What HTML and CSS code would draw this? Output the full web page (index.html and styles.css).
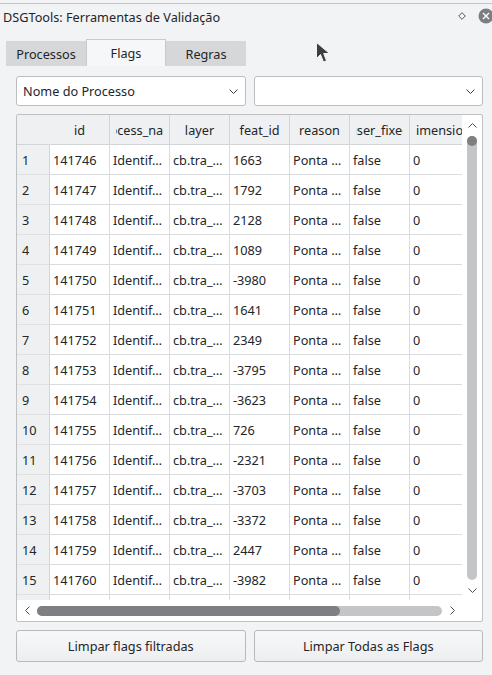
FILE: index.html
```html
<!DOCTYPE html>
<html lang="pt">
<head>
<meta charset="utf-8">
<title>DSGTools: Ferramentas de Validação</title>
<link rel="stylesheet" href="styles.css">
</head>
<body>
<div class="topline"></div>
<div class="titlebar">
  <span class="title">DSGTools: Ferramentas de Validação</span>
  <svg class="float-ic" viewBox="0 0 8 8"><path d="M4 0.7 L7.3 4 L4 7.3 L0.7 4 Z" fill="none" stroke="#55585b" stroke-width="1"/></svg>
  <svg class="close-ic" viewBox="0 0 16 16"><circle cx="8" cy="8" r="7.5" fill="#7c7e81"/><path d="M5 5 L11 11 M11 5 L5 11" stroke="#fff" stroke-width="1.4"/></svg>
</div>
<div class="tabs">
  <div class="tab">Processos</div>
  <div class="tab active">Flags</div>
  <div class="tab">Regras</div>
</div>
<div class="panel">
  <div class="combos">
    <div class="combo"><span class="combo-text">Nome do Processo</span><svg class="chev" viewBox="0 0 9 5"><polyline points="0.5,0.5 4.5,4.5 8.5,0.5" fill="none" stroke="#3d4043" stroke-width="1"/></svg></div>
    <div class="combo"><span class="combo-text"></span><svg class="chev" viewBox="0 0 9 5"><polyline points="0.5,0.5 4.5,4.5 8.5,0.5" fill="none" stroke="#3d4043" stroke-width="1"/></svg></div>
  </div>
  <div class="frame">
    <div class="frame-main">
      <div class="viewport">
        <table>
          <colgroup><col class="c-vh"><col class="c"><col class="c"><col class="c"><col class="c"><col class="c"><col class="c"><col class="c"></colgroup>
          <thead>
            <tr>
              <th class="corner"></th>
              <th><div class="h"><span>id</span></div></th>
              <th><div class="h"><span>process_name</span></div></th>
              <th><div class="h"><span>layer</span></div></th>
              <th><div class="h"><span>feat_id</span></div></th>
              <th><div class="h"><span>reason</span></div></th>
              <th><div class="h"><span>user_fixed</span></div></th>
              <th><div class="h"><span>dimension</span></div></th>
            </tr>
          </thead>
          <tbody>
            <tr><td class="vh">1</td><td>141746</td><td>Identif…</td><td>cb.tra_…</td><td>1663</td><td>Ponta …</td><td>false</td><td>0</td></tr>
            <tr><td class="vh">2</td><td>141747</td><td>Identif…</td><td>cb.tra_…</td><td>1792</td><td>Ponta …</td><td>false</td><td>0</td></tr>
            <tr><td class="vh">3</td><td>141748</td><td>Identif…</td><td>cb.tra_…</td><td>2128</td><td>Ponta …</td><td>false</td><td>0</td></tr>
            <tr><td class="vh">4</td><td>141749</td><td>Identif…</td><td>cb.tra_…</td><td>1089</td><td>Ponta …</td><td>false</td><td>0</td></tr>
            <tr><td class="vh">5</td><td>141750</td><td>Identif…</td><td>cb.tra_…</td><td>-3980</td><td>Ponta …</td><td>false</td><td>0</td></tr>
            <tr><td class="vh">6</td><td>141751</td><td>Identif…</td><td>cb.tra_…</td><td>1641</td><td>Ponta …</td><td>false</td><td>0</td></tr>
            <tr><td class="vh">7</td><td>141752</td><td>Identif…</td><td>cb.tra_…</td><td>2349</td><td>Ponta …</td><td>false</td><td>0</td></tr>
            <tr><td class="vh">8</td><td>141753</td><td>Identif…</td><td>cb.tra_…</td><td>-3795</td><td>Ponta …</td><td>false</td><td>0</td></tr>
            <tr><td class="vh">9</td><td>141754</td><td>Identif…</td><td>cb.tra_…</td><td>-3623</td><td>Ponta …</td><td>false</td><td>0</td></tr>
            <tr><td class="vh">10</td><td>141755</td><td>Identif…</td><td>cb.tra_…</td><td>726</td><td>Ponta …</td><td>false</td><td>0</td></tr>
            <tr><td class="vh">11</td><td>141756</td><td>Identif…</td><td>cb.tra_…</td><td>-2321</td><td>Ponta …</td><td>false</td><td>0</td></tr>
            <tr><td class="vh">12</td><td>141757</td><td>Identif…</td><td>cb.tra_…</td><td>-3703</td><td>Ponta …</td><td>false</td><td>0</td></tr>
            <tr><td class="vh">13</td><td>141758</td><td>Identif…</td><td>cb.tra_…</td><td>-3372</td><td>Ponta …</td><td>false</td><td>0</td></tr>
            <tr><td class="vh">14</td><td>141759</td><td>Identif…</td><td>cb.tra_…</td><td>2447</td><td>Ponta …</td><td>false</td><td>0</td></tr>
            <tr><td class="vh">15</td><td>141760</td><td>Identif…</td><td>cb.tra_…</td><td>-3982</td><td>Ponta …</td><td>false</td><td>0</td></tr>
            <tr><td class="vh"></td><td></td><td></td><td></td><td></td><td></td><td></td><td></td></tr>
          </tbody>
        </table>
      </div>
      <div class="vscroll">
        <div class="varr"><svg class="schev" viewBox="0 0 9 5"><polyline points="0.5,4.5 4.5,0.5 8.5,4.5" fill="none" stroke="#4a4d50" stroke-width="1"/></svg></div>
        <div class="vtrack"><div class="vhandle"></div></div>
        <div class="varr"><svg class="schev" viewBox="0 0 9 5"><polyline points="0.5,0.5 4.5,4.5 8.5,0.5" fill="none" stroke="#4a4d50" stroke-width="1"/></svg></div>
      </div>
    </div>
    <div class="frame-bottom">
      <div class="hscroll">
        <div class="harr"><svg class="hchev" viewBox="0 0 5 9"><polyline points="4.5,0.5 0.5,4.5 4.5,8.5" fill="none" stroke="#4a4d50" stroke-width="1"/></svg></div>
        <div class="htrack"><div class="hhandle"></div></div>
        <div class="harr"><svg class="hchev" viewBox="0 0 5 9"><polyline points="0.5,0.5 4.5,4.5 0.5,8.5" fill="none" stroke="#4a4d50" stroke-width="1"/></svg></div>
      </div>
      <div class="corner-box"></div>
    </div>
  </div>
  <div class="buttons">
    <button class="btn">Limpar flags filtradas</button>
    <button class="btn">Limpar Todas as Flags</button>
  </div>
</div>
<svg class="cursor" viewBox="0 0 17 24" width="17" height="24"><path d="M1.5 1.5 L1.5 17.5 L5.5 13.5 L8.5 21 L11.5 19.8 L8.7 12.5 L14.5 12.5 Z" fill="#3b3d40" stroke="#f4f4f4" stroke-width="1" stroke-linejoin="round"/></svg>
</body>
</html>
```

FILE: styles.css
```css
* { box-sizing: border-box; }
html, body { margin: 0; padding: 0; }
body {
  width: 492px;
  height: 675px;
  overflow: hidden;
  position: relative;
  background: #f2f3f5;
  font-family: "Noto Sans", "DejaVu Sans", sans-serif;
  font-size: 12.7px;
  color: #232629;
}
.topline { height: 4px; border-bottom: 1px solid #c4c5c7; }
.titlebar {
  height: 26px;
  display: flex;
  align-items: center;
  padding-left: 3px;
  line-height: 26px;
}
.title { flex: 1; white-space: nowrap; }
.float-ic { width: 8px; height: 8px; margin-right: 12px; margin-bottom: 2px; }
.close-ic { width: 16px; height: 16px; margin-right: -2px; margin-bottom: 2px; }

.tabs { display: flex; margin-top: 9px; margin-left: 6px; height: 27px; }
.tab {
  width: 80px;
  margin-top: 2px;
  height: 25px;
  background: #d6d7d9;
  display: flex;
  align-items: center;
  justify-content: center;
}
.tab.active {
  margin-top: 0;
  height: 27px;
  background: #f6f7f8;
  border: 1px solid #c9cacc;
  border-bottom: none;
  padding-bottom: 1px;
}

.panel { padding: 10px 9px 0 16px; }
.combos { display: flex; gap: 8px; }
.combo {
  flex: 1;
  height: 30px;
  background: #fff;
  border: 1px solid #bcbdbf;
  border-radius: 3px;
  display: flex;
  align-items: center;
  padding: 0 7px 0 6px;
}
.combo-text { flex: 1; }
.chev { width: 9px; height: 5px; }

.frame {
  margin-top: 8px;
  height: 508px;
  border: 1px solid #bfc0c2;
  border-radius: 2px;
  background: #fff;
  display: flex;
  flex-direction: column;
}
.frame-main { display: flex; height: 485px; }
.viewport { width: 445px; overflow: hidden; }

table {
  border-collapse: separate;
  border-spacing: 0;
  table-layout: fixed;
  width: 453px;
}
col.c-vh { width: 33px; }
col.c { width: 60px; }
th, td {
  height: 30px;
  padding: 0;
  white-space: nowrap;
  overflow: hidden;
  font-weight: normal;
  text-align: left;
}
th {
  background: #eff0f1;
  border-right: 1px solid #d3d4d6;
  border-bottom: 1px solid #d3d4d6;
  padding: 0 6px;
}
th.corner { border-right-color: #eff0f1; }
.h { display: flex; justify-content: center; overflow: hidden; width: 100%; }
.h span { flex: none; }
td {
  border-right: 1px solid #dadbdc;
  border-bottom: 1px solid #dadbdc;
  padding-left: 3px;
}
td.vh {
  background: #eff0f1;
  padding-left: 5px;
  border-right: 1px solid #d3d4d6;
  border-bottom: 1px solid #e0e1e2;
}

.vscroll { width: 20px; display: flex; flex-direction: column; align-items: center; }
.varr { height: 20px; width: 20px; display: flex; align-items: center; justify-content: center; }
.schev { width: 9px; height: 5px; }
.vtrack { flex: 1; width: 10px; border-radius: 5px; background: #c4c5c7; margin: 1px 0 0; }
.vhandle { height: 10px; width: 10px; border-radius: 5px; background: #7d7f82; }

.frame-bottom { display: flex; height: 21px; }
.hscroll { width: 445px; display: flex; align-items: center; }
.harr { width: 20px; height: 20px; display: flex; align-items: center; justify-content: center; }
.hchev { width: 5px; height: 9px; }
.htrack { flex: 1; height: 10px; border-radius: 5px; background: #c4c5c7; }
.hhandle { width: 303px; height: 10px; border-radius: 5px; background: #7d7f82; }
.corner-box { width: 20px; }

.buttons { display: flex; gap: 8px; margin-top: 8px; }
.btn {
  flex: 1;
  height: 32px;
  font: inherit;
  color: inherit;
  border: 1px solid #b8b9bb;
  border-radius: 3px;
  background: linear-gradient(#f8f8f9, #edeeef);
  padding: 0;
}

.cursor { position: absolute; left: 315px; top: 41px; }
```
